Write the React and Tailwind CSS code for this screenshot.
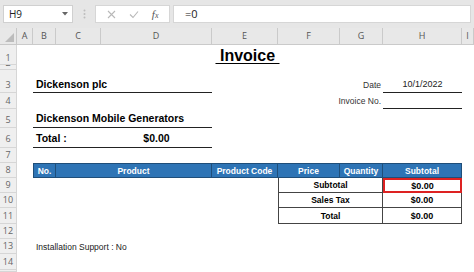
import React from "react";

const colHeads = [
  { l: "A", cls: "col-start-2" },
  { l: "B", cls: "col-start-3" },
  { l: "C", cls: "col-start-4" },
  { l: "D", cls: "col-start-5" },
  { l: "E", cls: "col-start-6" },
  { l: "F", cls: "col-start-7" },
  { l: "G", cls: "col-start-8" },
  { l: "H", cls: "col-start-9" },
  { l: "I", cls: "col-start-10" },
];

const rowHeads = [
  { n: "1", cls: "row-start-2 pb-0" },
  { n: "2", cls: "row-start-3 pb-0" },
  { n: "3", cls: "row-start-4 pb-[1px]" },
  { n: "4", cls: "row-start-5 pb-[1px]" },
  { n: "5", cls: "row-start-6 pb-[1px]" },
  { n: "6", cls: "row-start-7 pb-[2px]" },
  { n: "7", cls: "row-start-8 pb-[1px]" },
  { n: "8", cls: "row-start-9 pb-[1px]" },
  { n: "9", cls: "row-start-10 pb-[1px]" },
  { n: "10", cls: "row-start-11 pb-[1px]" },
  { n: "11", cls: "row-start-12 pb-[1px]" },
  { n: "12", cls: "row-start-13 pb-[1px]" },
  { n: "13", cls: "row-start-14 pb-[1px]" },
  { n: "14", cls: "row-start-15 pb-[1px]" },
  { n: "", cls: "row-start-16" },
];

// header of the item table (row 8)
const tableHead = [
  { t: "No.", cls: "col-start-3 border-l" },
  { t: "Product", cls: "col-start-4 col-span-2" },
  { t: "Product Code", cls: "col-start-6" },
  { t: "Price", cls: "col-start-7" },
  { t: "Quantity", cls: "col-start-8" },
  { t: "Subtotal", cls: "col-start-9" },
];

const totals = [
  { label: "Subtotal", row: "row-start-10", active: true },
  { label: "Sales Tax", row: "row-start-11" },
  { label: "Total", row: "row-start-12" },
];

const Toolbar = () => (
  <div className="h-[28px] bg-[#e6e6e6] flex items-start pt-[5px] px-[3px] font-['Open_Sans','Noto_Sans',sans-serif]">
    {/* Name box */}
    <div className="w-[70px] h-[18px] bg-white border border-[#d0d0d0] flex items-center justify-between pl-[5px] pr-[4px]">
      <span className="text-[10px] text-[#222]">H9</span>
      <svg width="6" height="4" viewBox="0 0 6 4">
        <polygon points="0,0 6,0 3,3.5" fill="#666" />
      </svg>
    </div>
    <div className="w-[22px] h-[18px] flex items-center justify-center">
      <svg width="3" height="10" viewBox="0 0 3 10">
        <circle cx="1.5" cy="1.5" r="1" fill="#bdbdbd" />
        <circle cx="1.5" cy="5" r="1" fill="#bdbdbd" />
        <circle cx="1.5" cy="8.5" r="1" fill="#bdbdbd" />
      </svg>
    </div>
    {/* cancel / enter / fx */}
    <div className="w-[75px] h-[18px] bg-white border border-[#d6d6d6] flex items-center justify-around px-[4px]">
      <svg width="9" height="9" viewBox="0 0 9 9">
        <path d="M1 1 L8 8 M8 1 L1 8" stroke="#b8b8b8" strokeWidth="1.1" />
      </svg>
      <svg width="10" height="9" viewBox="0 0 10 9">
        <path d="M1 4.5 L4 7.5 L9 1.5" stroke="#b8b8b8" strokeWidth="1.1" fill="none" />
      </svg>
      <span className="italic text-[11px] text-[#555] font-['Liberation_Serif',serif] leading-none">
        f<span className="text-[8px]">x</span>
      </span>
    </div>
    {/* formula bar */}
    <div className="ml-[3px] flex-1 h-[18px] bg-white border border-[#d6d6d6] flex items-center pl-[11px]">
      <span className="text-[11px] text-[#222]">=0</span>
    </div>
  </div>
);

const Sheet = () => (
  <div className="grid grid-cols-[17px_16px_23px_45px_111px_66px_62px_43px_79px_12px] grid-rows-[17px_20px_5px_23px_16px_19px_20px_15px_15px_15px_15px_16px_15px_15px_16px_2px] bg-white font-['Liberation_Sans',Arial,sans-serif] text-black">
    {/* corner */}
    <div className="col-start-1 row-start-1 bg-[#e8e8e8] border-r border-b border-[#c8c8c8] flex items-end justify-end p-[2px]">
      <svg width="9" height="9" viewBox="0 0 9 9">
        <polygon points="9,0 9,9 0,9" fill="#bcbcbc" />
      </svg>
    </div>

    {/* column headers */}
    {colHeads.map((c) => (
      <div
        key={c.l}
        className={`${c.cls} row-start-1 bg-[#e8e8e8] border-r border-b border-[#cacaca] flex items-center justify-center text-[9px] text-[#555] font-['Open_Sans','Noto_Sans',sans-serif]`}
      >
        {c.l}
      </div>
    ))}

    {/* row headers */}
    {rowHeads.map((r) => (
      <div
        key={r.cls}
        className={`${r.cls} col-start-1 bg-[#efefef] border-r border-b border-[#d6d6d6] overflow-hidden flex items-end justify-center text-[9px] leading-[12px] text-[#666] font-['Open_Sans','Noto_Sans',sans-serif]`}
      >
        {r.n}
      </div>
    ))}

    {/* Title */}
    <div className="col-start-3 col-span-7 row-start-2 flex items-end justify-center">
      <span className="whitespace-pre text-[16px] font-bold leading-[18px] underline decoration-1 underline-offset-[2px]">
        {" Invoice "}
      </span>
    </div>

    {/* Company */}
    <div className="col-start-3 col-span-3 row-start-4 border-b border-[#222] flex items-end pl-[3px] pb-[2px]">
      <span className="text-[10.5px] font-bold leading-[12px]">Dickenson plc</span>
    </div>
    <div className="col-start-8 row-start-4 flex items-end justify-end pr-[2px] pb-[2px]">
      <span className="text-[8.5px] leading-[12px] text-[#333] whitespace-nowrap">Date</span>
    </div>
    <div className="col-start-9 row-start-4 border-b border-[#222] flex items-end justify-center pb-[2px]">
      <span className="text-[9px] leading-[12px] text-[#222]">10/1/2022</span>
    </div>

    <div className="col-start-8 row-start-5 flex items-center justify-end pr-[2px]">
      <span className="shrink-0 text-[8.5px] leading-[12px] text-[#333] whitespace-nowrap">Invoice No.</span>
    </div>
    <div className="col-start-9 row-start-5 border-b border-[#222]" />

    <div className="col-start-3 col-span-3 row-start-6 border-b border-[#222] flex items-end pl-[3px] pb-[3px]">
      <span className="text-[10.5px] font-bold leading-[12px]">Dickenson Mobile Generators</span>
    </div>

    <div className="col-start-3 col-span-2 row-start-7 border-b border-[#222] flex items-center pl-[3px]">
      <span className="text-[10.5px] font-bold leading-[12px]">Total :</span>
    </div>
    <div className="col-start-5 row-start-7 border-b border-[#222] flex items-center justify-center">
      <span className="text-[10.5px] font-bold leading-[12px]">$0.00</span>
    </div>

    {/* Item table header */}
    {tableHead.map((h) => (
      <div
        key={h.t}
        className={`${h.cls} row-start-9 bg-[#2e74b5] border-t border-r border-b border-[#1f4e79] flex items-center justify-center`}
      >
        <span className="text-[8.5px] font-bold text-white leading-[12px] whitespace-nowrap">{h.t}</span>
      </div>
    ))}

    {/* Totals */}
    {totals.map((t) => (
      <React.Fragment key={t.label}>
        <div className={`${t.row} col-start-7 col-span-2 border-l border-r border-b border-[#444] flex items-center justify-center`}>
          <span className="text-[8.5px] font-bold leading-[12px]">{t.label}</span>
        </div>
        <div
          className={`${t.row} col-start-9 flex items-center justify-center ${
            t.active ? "border-2 border-[#dd2222]" : "border-r border-b border-[#444]"
          }`}
        >
          <span className="text-[9px] font-bold leading-[12px]">$0.00</span>
        </div>
      </React.Fragment>
    ))}

    {/* Note */}
    <div className="col-start-3 col-span-5 row-start-14 flex items-center pl-[3px]">
      <span className="text-[8.5px] leading-[12px] text-[#222]">Installation Support : No</span>
    </div>
  </div>
);

export default function App() {
  return (
    <div className="w-[474px] h-[272px] overflow-hidden bg-white">
      <Toolbar />
      <Sheet />
    </div>
  );
}
